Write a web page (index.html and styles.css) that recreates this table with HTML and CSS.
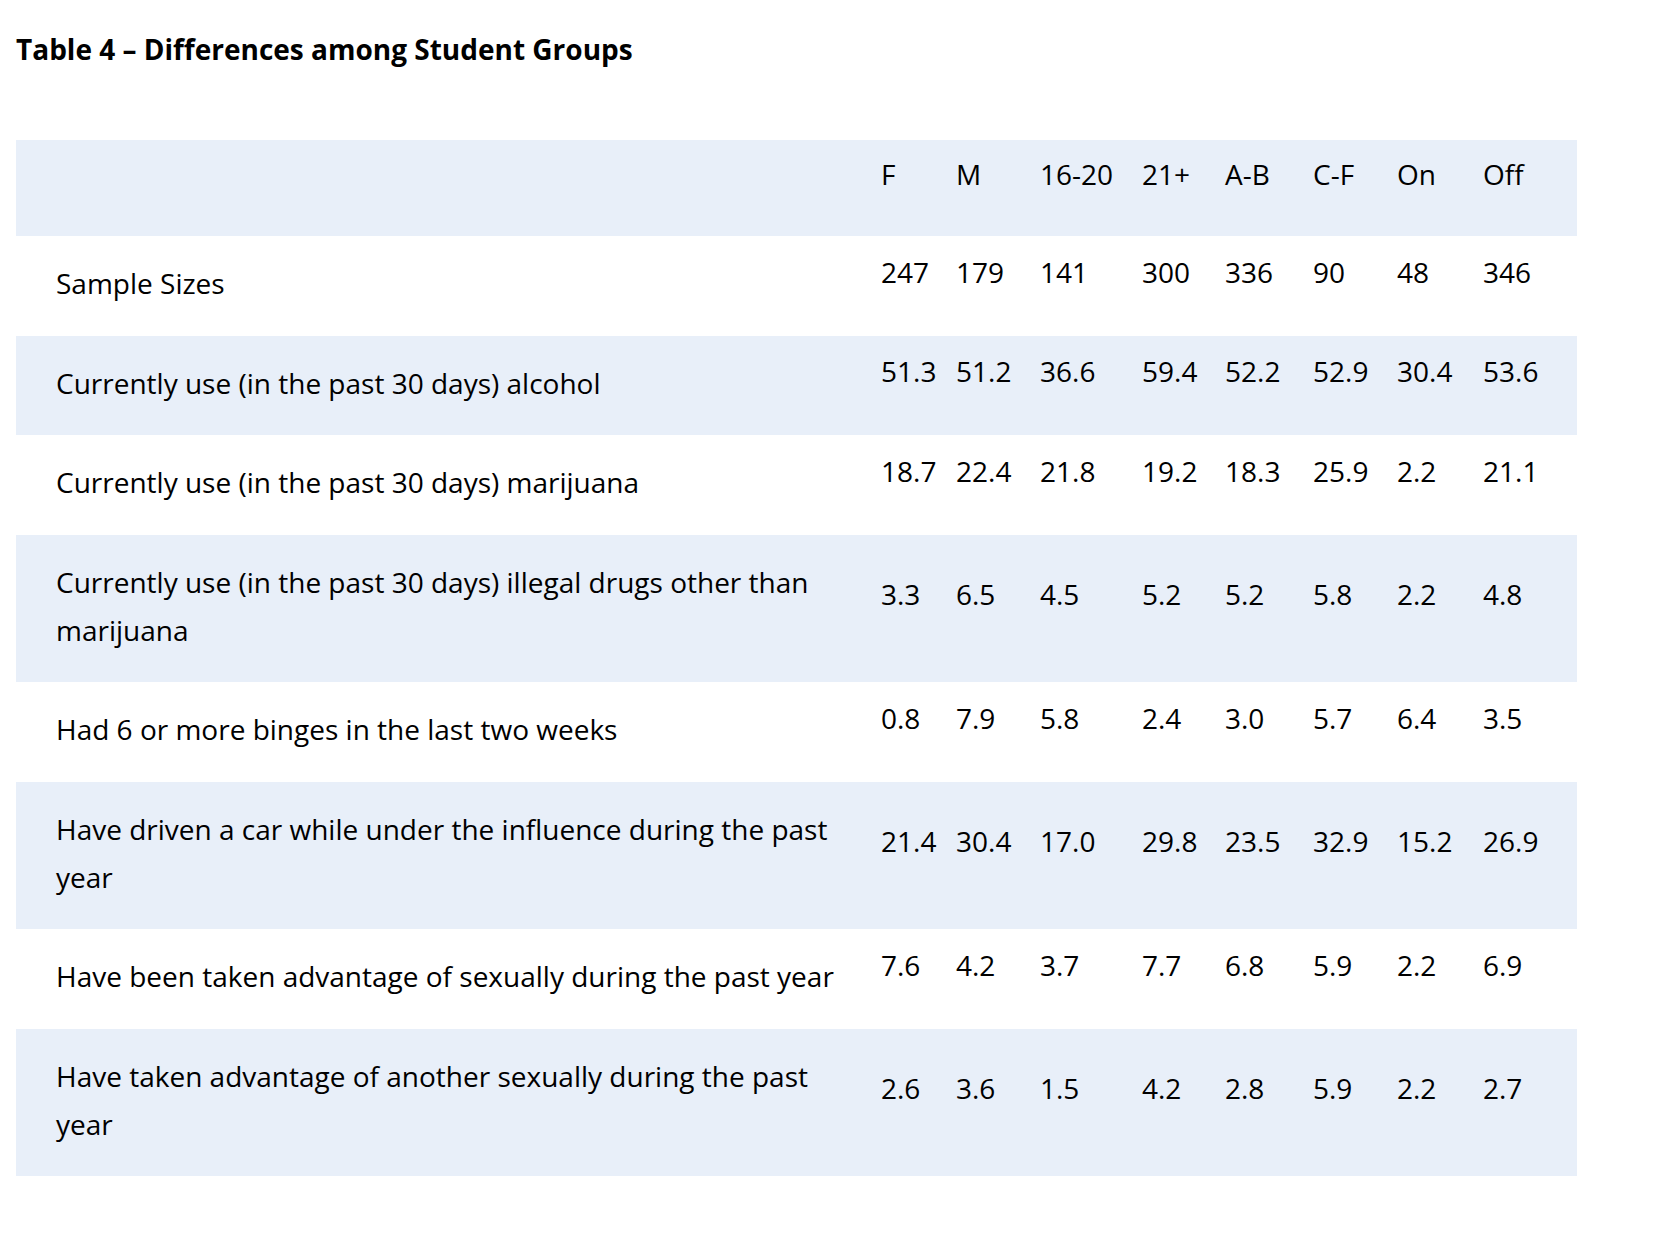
FILE: index.html
```html
<!DOCTYPE html>
<html lang="en">
<head>
<meta charset="utf-8">
<title>Table 4 – Differences among Student Groups</title>
<link rel="stylesheet" href="styles.css">
</head>
<body>
<div class="page">
  <h2 class="title">Table 4 – Differences among Student Groups</h2>
  <table class="data">
    <colgroup>
      <col class="c-label">
      <col class="c-f"><col class="c-m"><col class="c-y"><col class="c-o">
      <col class="c-ab"><col class="c-cf"><col class="c-on"><col class="c-off">
    </colgroup>
    <thead>
      <tr>
        <th class="label"></th>
        <th class="num">F</th><th class="num">M</th><th class="num">16-20</th><th class="num">21+</th>
        <th class="num">A-B</th><th class="num">C-F</th><th class="num">On</th><th class="num">Off</th>
      </tr>
    </thead>
    <tbody>
      <tr>
        <td class="label">Sample Sizes</td>
        <td class="num">247</td><td class="num">179</td><td class="num">141</td><td class="num">300</td>
        <td class="num">336</td><td class="num">90</td><td class="num">48</td><td class="num">346</td>
      </tr>
      <tr>
        <td class="label">Currently use (in the past 30 days) alcohol</td>
        <td class="num">51.3</td><td class="num">51.2</td><td class="num">36.6</td><td class="num">59.4</td>
        <td class="num">52.2</td><td class="num">52.9</td><td class="num">30.4</td><td class="num">53.6</td>
      </tr>
      <tr>
        <td class="label">Currently use (in the past 30 days) marijuana</td>
        <td class="num">18.7</td><td class="num">22.4</td><td class="num">21.8</td><td class="num">19.2</td>
        <td class="num">18.3</td><td class="num">25.9</td><td class="num">2.2</td><td class="num">21.1</td>
      </tr>
      <tr>
        <td class="label">Currently use (in the past 30 days) illegal drugs other than marijuana</td>
        <td class="num">3.3</td><td class="num">6.5</td><td class="num">4.5</td><td class="num">5.2</td>
        <td class="num">5.2</td><td class="num">5.8</td><td class="num">2.2</td><td class="num">4.8</td>
      </tr>
      <tr>
        <td class="label">Had 6 or more binges in the last two weeks</td>
        <td class="num">0.8</td><td class="num">7.9</td><td class="num">5.8</td><td class="num">2.4</td>
        <td class="num">3.0</td><td class="num">5.7</td><td class="num">6.4</td><td class="num">3.5</td>
      </tr>
      <tr>
        <td class="label">Have driven a car while under the influence during the past year</td>
        <td class="num">21.4</td><td class="num">30.4</td><td class="num">17.0</td><td class="num">29.8</td>
        <td class="num">23.5</td><td class="num">32.9</td><td class="num">15.2</td><td class="num">26.9</td>
      </tr>
      <tr>
        <td class="label">Have been taken advantage of sexually during the past year</td>
        <td class="num">7.6</td><td class="num">4.2</td><td class="num">3.7</td><td class="num">7.7</td>
        <td class="num">6.8</td><td class="num">5.9</td><td class="num">2.2</td><td class="num">6.9</td>
      </tr>
      <tr>
        <td class="label">Have taken advantage of another sexually during the past year</td>
        <td class="num">2.6</td><td class="num">3.6</td><td class="num">1.5</td><td class="num">4.2</td>
        <td class="num">2.8</td><td class="num">5.9</td><td class="num">2.2</td><td class="num">2.7</td>
      </tr>
    </tbody>
  </table>
</div>
</body>
</html>
```
FILE: styles.css
```css
html, body {
  margin: 0;
  padding: 0;
  background: #ffffff;
}

body {
  font-family: "Open Sans", "Noto Sans", "Liberation Sans", sans-serif;
  color: #000000;
}

.page {
  padding: 0 0 0 16px;
}

.title {
  box-sizing: border-box;
  margin: 0;
  padding-top: 29px;
  height: 140px;
  font-size: 28px;
  line-height: 40px;
  font-weight: 700;
}

.data {
  border-collapse: collapse;
  border-spacing: 0;
  table-layout: fixed;
  width: 1561px;
  font-size: 28px;
  line-height: 48px;
}

.c-label { width: 865px; }
.c-f { width: 75px; }
.c-m { width: 84px; }
.c-y { width: 102px; }
.c-o { width: 83px; }
.c-ab { width: 88px; }
.c-cf { width: 84px; }
.c-on { width: 86px; }
.c-off { width: 94px; }

.data th {
  font-weight: 400;
  text-align: left;
}

.data thead tr,
.data tbody tr:nth-child(even) {
  background: #e8eff9;
}

.data .label {
  padding: 23px 40px 28.5px 40px;
  text-align: left;
  vertical-align: middle;
}

.data .num {
  padding: 10px 0 38px 0;
  text-align: left;
  vertical-align: middle;
  white-space: nowrap;
}
```
